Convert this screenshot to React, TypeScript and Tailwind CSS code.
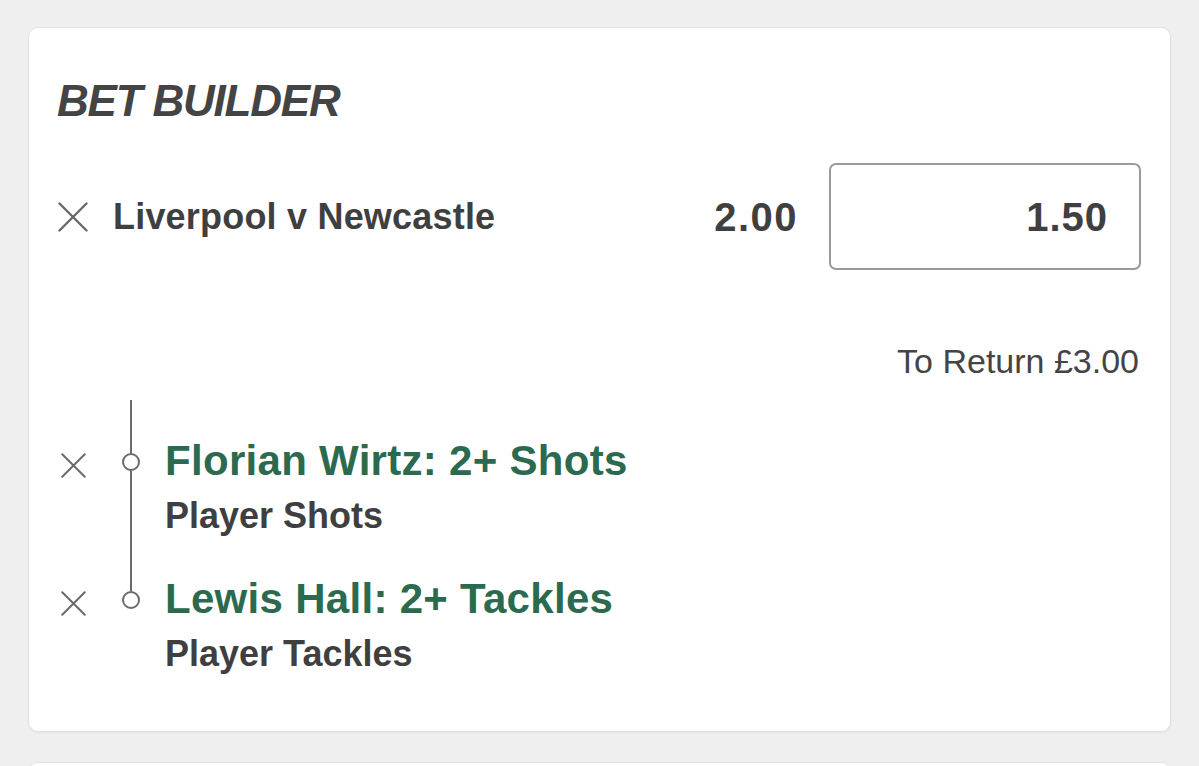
import React from 'react';

const Cross = ({ size }: { size: number }) => (
  <svg width={size} height={size} viewBox="0 0 30 30" fill="none" className="shrink-0">
    <path d="M1.5 1.5 L28.5 28.5 M28.5 1.5 L1.5 28.5" stroke="#6a6a6a" strokeWidth={size > 26 ? 2.4 : 2.4} strokeLinecap="round" />
  </svg>
);

type Leg = { title: string; market: string; last?: boolean };

const legs: Leg[] = [
  { title: 'Florian Wirtz: 2+ Shots', market: 'Player Shots' },
  { title: 'Lewis Hall: 2+ Tackles', market: 'Player Tackles', last: true },
];

function LegRow({ leg }: { leg: Leg }) {
  return (
    <div className="flex pl-[4px]">
      {/* remove */}
      <div className="pt-[53px]">
        <Cross size={25} />
      </div>

      {/* connector */}
      <div className="ml-[36px] w-[18px] flex flex-col items-center">
        <div className="w-[2px] h-[53px] bg-[#6a6a6a]" />
        <div className="w-[18px] h-[18px] rounded-full border-2 border-[#6a6a6a] bg-white" />
        {!leg.last && <div className="w-[2px] flex-1 bg-[#6a6a6a]" />}
      </div>

      {/* selection */}
      <div className={`ml-[25px] pt-[40px] ${leg.last ? '' : 'pb-[4px]'}`}>
        <div className="text-[42px] leading-[42px] font-bold tracking-[0.3px] text-[#2b6a4e]">{leg.title}</div>
        <div className="mt-[16px] text-[36px] leading-[36px] font-bold text-[#3f3f3f]">{leg.market}</div>
      </div>
    </div>
  );
}

export default function App() {
  return (
    <div className="w-[1199px] h-[766px] overflow-hidden bg-[#efefef] px-[28px] pt-[27px] flex flex-col gap-[30px] font-['Liberation_Sans',Arial,sans-serif]">
      {/* Bet builder card */}
      <div className="h-[705px] shrink-0 rounded-[10px] border border-[#e2e2e2] bg-white shadow-[0_1px_2px_rgba(0,0,0,0.05)] pl-[28px] pr-[29px] pt-[51px]">
        <h2 className="text-[44px] leading-[44px] font-bold italic tracking-[-1.2px] text-[#444444]">BET BUILDER</h2>

        {/* Match row */}
        <div className="mt-[40px] flex items-center">
          <div className="ml-[1px]">
            <Cross size={30} />
          </div>
          <div className="ml-[25px] text-[36px] leading-[36px] font-bold tracking-[0.2px] text-[#3f3f3f]">Liverpool v Newcastle</div>
          <div className="flex-1" />
          <div className="text-[40px] leading-[40px] font-bold tracking-[1.5px] text-[#3f3f3f]">2.00</div>
          <div className="ml-[31px] w-[312px] h-[107px] rounded-[7px] border-2 border-[#9a9a9a] flex items-center justify-end pr-[31px] text-[40px] leading-[40px] font-bold tracking-[1px] text-[#3f3f3f]">
            1.50
          </div>
        </div>

        <div className="mt-[74px] pr-[2px] text-right text-[34px] leading-[34px] text-[#444444]">To Return £3.00</div>

        {/* Legs */}
        <div className="mt-[22px] flex flex-col">
          {legs.map(l => (
            <LegRow key={l.title} leg={l} />
          ))}
        </div>
      </div>

      {/* next card (cut off) */}
      <div className="h-[200px] shrink-0 rounded-[10px] border border-[#e2e2e2] bg-white" />
    </div>
  );
}
